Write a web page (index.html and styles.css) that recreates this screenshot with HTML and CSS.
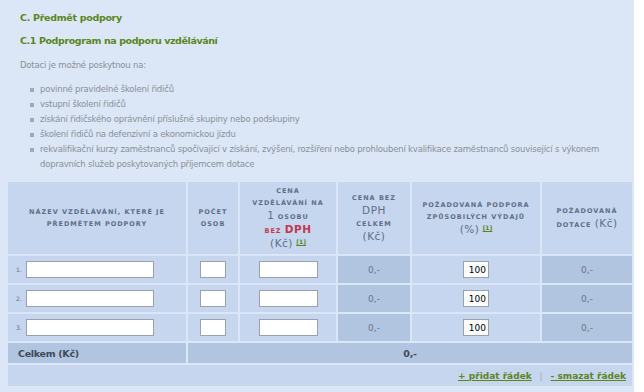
FILE: index.html
```html
<!DOCTYPE html>
<html>

<head>
  <title>C. Předmět podpory</title>
  <meta charset="utf-8">
  <link rel="stylesheet" href="styles.css">
</head>

<body>
  <div class="panel">
    <h2>C. Předmět podpory</h2>
    <h3>C.1 Podprogram na podporu vzdělávání</h3>
    <p class="intro">Dotaci je možné poskytnou na:</p>
    <ul class="bullets">
      <li>povinné pravidelné školení řidičů</li>
      <li>vstupní školení řidičů</li>
      <li>získání řidičského oprávnění příslušné skupiny nebo podskupiny</li>
      <li>školení řidičů na defenzivní a ekonomickou jízdu</li>
      <li>rekvalifikační kurzy zaměstnanců spočívající v získání, zvýšení, rozšíření nebo prohloubení kvalifikace zaměstnanců související s výkonem dopravních služeb poskytovaných příjemcem dotace</li>
    </ul>

    <table class="grid">
      <thead>
        <tr>
          <th class="c-name">Název vzdělávání, které je<br>předmětem podpory</th>
          <th class="c-count">Počet<br>osob</th>
          <th class="c-price">Cena<br>vzdělávání na<br><span class="big">1</span> osobu<br><span class="red">bez <span class="big">DPH</span></span><br><span class="big">(Kč)</span> <a href="#" class="note">[1]</a></th>
          <th class="c-total">Cena bez<br><span class="big">DPH</span><br>celkem<br><span class="big">(Kč)</span></th>
          <th class="c-pct">Požadovaná podpora<br>způsobilých výdajů<br><span class="big">(%)</span> <a href="#" class="note">[1]</a></th>
          <th class="c-grant">Požadovaná<br>dotace <span class="big">(Kč)</span></th>
        </tr>
      </thead>
      <tbody>
        <tr>
          <td class="name"><span class="num">1.</span><input type="text" class="in-name"></td>
          <td><input type="text" class="in-count"></td>
          <td><input type="text" class="in-price"></td>
          <td class="calc">0,-</td>
          <td><input type="text" class="in-pct" value="100"></td>
          <td class="calc">0,-</td>
        </tr>
        <tr>
          <td class="name"><span class="num">2.</span><input type="text" class="in-name"></td>
          <td><input type="text" class="in-count"></td>
          <td><input type="text" class="in-price"></td>
          <td class="calc">0,-</td>
          <td><input type="text" class="in-pct" value="100"></td>
          <td class="calc">0,-</td>
        </tr>
        <tr>
          <td class="name"><span class="num">3.</span><input type="text" class="in-name"></td>
          <td><input type="text" class="in-count"></td>
          <td><input type="text" class="in-price"></td>
          <td class="calc">0,-</td>
          <td><input type="text" class="in-pct" value="100"></td>
          <td class="calc">0,-</td>
        </tr>
        <tr class="sum">
          <td class="sum-label">Celkem (Kč)</td>
          <td colspan="5" class="sum-value">0,-</td>
        </tr>
        <tr class="actions">
          <td colspan="6">
            <a href="#" class="action">+ přidat řádek</a>
            <span class="sep">|</span>
            <a href="#" class="action">- smazat řádek</a>
          </td>
        </tr>
      </tbody>
    </table>
  </div>
</body>

</html>
```

FILE: styles.css
```css
body {
  margin: 0;
  background-color: #fff;
  font-family: "DejaVu Sans", Verdana, sans-serif;
}

.panel {
  width: 624px;
  height: 392px;
  padding: 0 2px 0 8px;
  background-color: #dbe7f7;
  overflow: hidden;
}

.panel h2 {
  margin: 0;
  padding: 11px 0 0 12px;
  font-size: 9.5px;
  letter-spacing: -0.3px;
  line-height: 14px;
  color: #5a8522;
}

.panel h3 {
  margin: 0;
  padding: 9px 0 0 12px;
  font-size: 9.5px;
  letter-spacing: -0.4px;
  line-height: 14px;
  color: #5a8522;
}

.intro {
  margin: 0;
  padding: 10px 0 0 12px;
  font-size: 8.5px;
  letter-spacing: -0.2px;
  line-height: 14px;
  color: #8a8f98;
}

.bullets {
  margin: 10px 0 0 0;
  padding: 0 18px 0 32px;
  list-style: none;
  font-size: 8.5px;
  letter-spacing: -0.2px;
  line-height: 15px;
  color: #8a8f98;
}

.bullets li {
  position: relative;
}

.bullets li::before {
  content: "";
  position: absolute;
  left: -10px;
  top: 6px;
  width: 4px;
  height: 4px;
  background-color: #a3a9b3;
}

.grid {
  width: 628px;
  margin: 8px 0 0 -2px;
  border-collapse: separate;
  border-spacing: 2px;
}

.grid th {
  height: 72px;
  padding: 0;
  background-color: #c6d6ef;
  font-size: 6.5px;
  line-height: 12px;
  letter-spacing: 1px;
  text-transform: uppercase;
  color: #5e6e88;
  font-weight: bold;
  vertical-align: middle;
}

.grid th .big {
  font-size: 10.5px;
  font-weight: normal;
  letter-spacing: 0.5px;
  line-height: 12px;
  text-transform: none;
}

.grid th .red {
  color: #c2384e;
}

.grid th .red .big {
  font-weight: bold;
}

.c-name { width: 178px; }
.c-count { width: 50px; }
.c-price { width: 96px; }
.c-total { width: 72px; }
.c-pct { width: 128px; }

.note {
  color: #5a8522;
  font-size: 6px;
  letter-spacing: 0;
  vertical-align: super;
  line-height: 0;
}

.grid td {
  height: 27px;
  padding: 0;
  background-color: #c6d6ef;
  text-align: center;
  font-size: 9px;
  color: #6b7687;
}

.grid td.calc {
  background-color: #b1c4e0;
}

.grid td.name {
  text-align: left;
  padding-left: 8px;
}

.num {
  display: inline-block;
  width: 10px;
  font-size: 6px;
  color: #5e6e88;
}

.grid input {
  height: 15px;
  padding: 0 2px;
  border: 1px solid #9aa3ad;
  background-color: #fff;
  font-family: "DejaVu Sans", Verdana, sans-serif;
  font-size: 9px;
  box-sizing: content-box;
  vertical-align: middle;
}

.in-name { width: 122px; }
.in-count { width: 20px; }
.in-price { width: 53px; }
.in-pct { width: 20px; text-align: right; }

.grid tr.sum td {
  height: 20px;
  background-color: #b1c4e0;
  font-size: 9.5px;
  letter-spacing: -0.3px;
  font-weight: bold;
  color: #3f4a5a;
}

.grid tr.sum td.sum-label {
  text-align: left;
  padding-left: 10px;
}

.grid tr.actions td {
  height: 21px;
  text-align: right;
  padding-right: 6px;
  font-size: 9px;
}

.action {
  color: #5a8522;
  font-weight: bold;
  text-decoration: underline;
}

.sep {
  margin: 0 5px;
  color: #a3a9b3;
}
```
